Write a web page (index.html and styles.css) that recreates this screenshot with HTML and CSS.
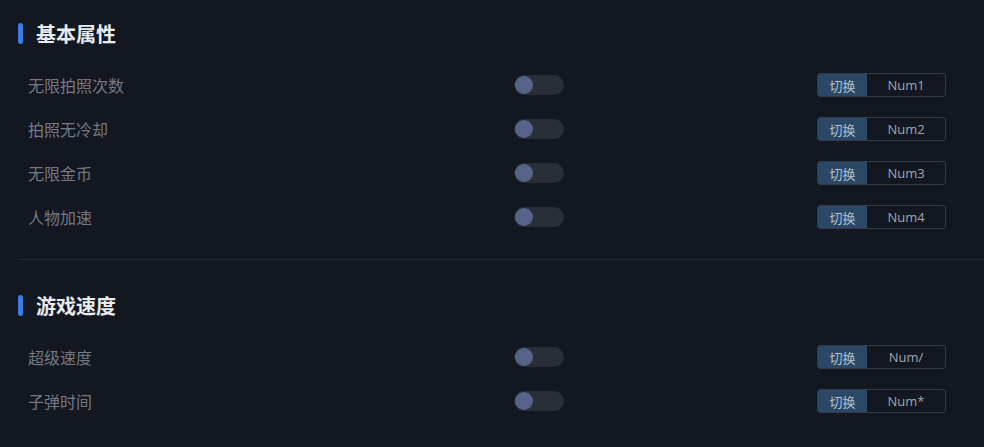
FILE: index.html
```html
<!DOCTYPE html>
<html lang="zh-CN">
<head>
    <meta charset="UTF-8">
    <meta name="viewport" content="width=device-width, initial-scale=1.0">
    <title>修改器</title>
    <link rel="stylesheet" href="styles.css">
</head>
<body>
    <div class="panel">
        <div class="section">
            <h2 class="section-title">基本属性</h2>
            <div class="row">
                <span class="label">无限拍照次数</span>
                <div class="toggle"></div>
                <div class="hotkey"><span class="hotkey-tag">切换</span><span class="hotkey-key">Num1</span></div>
            </div>
            <div class="row">
                <span class="label">拍照无冷却</span>
                <div class="toggle"></div>
                <div class="hotkey"><span class="hotkey-tag">切换</span><span class="hotkey-key">Num2</span></div>
            </div>
            <div class="row">
                <span class="label">无限金币</span>
                <div class="toggle"></div>
                <div class="hotkey"><span class="hotkey-tag">切换</span><span class="hotkey-key">Num3</span></div>
            </div>
            <div class="row">
                <span class="label">人物加速</span>
                <div class="toggle"></div>
                <div class="hotkey"><span class="hotkey-tag">切换</span><span class="hotkey-key">Num4</span></div>
            </div>
        </div>
        <div class="divider"></div>
        <div class="section">
            <h2 class="section-title">游戏速度</h2>
            <div class="row">
                <span class="label">超级速度</span>
                <div class="toggle"></div>
                <div class="hotkey"><span class="hotkey-tag">切换</span><span class="hotkey-key">Num/</span></div>
            </div>
            <div class="row">
                <span class="label">子弹时间</span>
                <div class="toggle"></div>
                <div class="hotkey"><span class="hotkey-tag">切换</span><span class="hotkey-key">Num*</span></div>
            </div>
        </div>
    </div>
</body>
</html>
```
FILE: styles.css
```css
body {
    margin: 0;
    background-color: #13171f;
    font-family: "Noto Sans CJK SC", "Noto Sans", sans-serif;
    color: #e6e9ef;
}
.panel {
    padding: 19px 0 0 18px;
}
.section-title {
    display: flex;
    align-items: center;
    height: 28px;
    margin: 0 0 16px 0;
    font-size: 20px;
    font-weight: 700;
    color: #e8ebf0;
}
.section-title::before {
    content: '';
    width: 5px;
    height: 21px;
    margin-right: 13px;
    border-radius: 3px;
    background-color: #3c7ce4;
}
.row {
    display: grid;
    grid-template-columns: 486px 50px 253px 129px;
    align-items: center;
    height: 44px;
    padding-left: 10px;
}
.label {
    font-size: 16px;
    color: #737984;
}
.toggle {
    position: relative;
    width: 50px;
    height: 20px;
    border-radius: 10px;
    background-color: #2a2e38;
}
.toggle::before {
    content: '';
    position: absolute;
    top: 1px;
    left: 1px;
    width: 18px;
    height: 18px;
    border-radius: 50%;
    background-color: #56648a;
}
.hotkey {
    grid-column: 4;
    display: flex;
    height: 24px;
    border: 1px solid #323d4c;
    border-radius: 3px;
    overflow: hidden;
    box-sizing: border-box;
    font-size: 13px;
}
.hotkey-tag {
    width: 49px;
    display: flex;
    align-items: center;
    justify-content: center;
    background-color: #2b4866;
    color: #b4c0cf;
}
.hotkey-key {
    flex: 1;
    display: flex;
    align-items: center;
    justify-content: center;
    font-family: "Open Sans", "Noto Sans", sans-serif;
    color: #9ea6b6;
}
.divider {
    height: 1px;
    margin: 20px 0 31px 0;
    background-color: #222730;
}
```
